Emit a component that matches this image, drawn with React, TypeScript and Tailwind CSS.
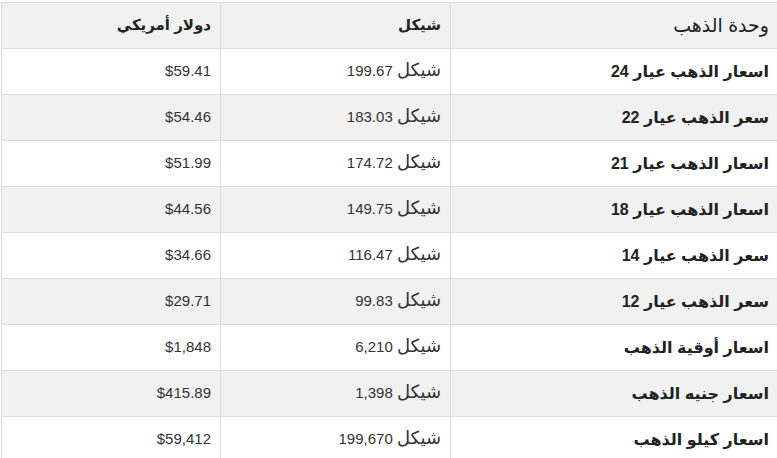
const rows = [
  { unit: "اسعار الذهب عيار 24", ils: "199.67", usd: "$59.41" },
  { unit: "سعر الذهب عيار 22", ils: "183.03", usd: "$54.46" },
  { unit: "اسعار الذهب عيار 21", ils: "174.72", usd: "$51.99" },
  { unit: "اسعار الذهب عيار 18", ils: "149.75", usd: "$44.56" },
  { unit: "سعر الذهب عيار 14", ils: "116.47", usd: "$34.66" },
  { unit: "سعر الذهب عيار 12", ils: "99.83", usd: "$29.71" },
  { unit: "اسعار أوقية الذهب", ils: "6,210", usd: "$1,848" },
  { unit: "اسعار جنيه الذهب", ils: "1,398", usd: "$415.89" },
  { unit: "اسعار كيلو الذهب", ils: "199,670", usd: "$59,412" },
];

export default function App() {
  return (
    <div className="w-[777px] h-[458px] overflow-hidden bg-white pt-[2px] pl-[1px]">
      <table
        dir="rtl"
        className="w-[777px] table-fixed border-collapse text-[15px] text-[#333] font-['Liberation_Sans','DejaVu_Sans',sans-serif]"
      >
        <colgroup>
          <col className="w-[328px]" />
          <col className="w-[230px]" />
          <col className="w-[219px]" />
        </colgroup>
        <thead>
          <tr className="h-[46px] bg-[#f1f1f1]">
            <th className="border border-[#dddddd] px-[9px] text-right font-normal text-[#222] text-[19px] leading-none">
              وحدة الذهب
            </th>
            <th className="border border-[#dddddd] px-[9px] text-right font-bold text-[#222]">شيكل</th>
            <th className="border border-[#dddddd] px-[9px] text-right font-bold text-[#222]">دولار أمريكي</th>
          </tr>
        </thead>
        <tbody>
          {rows.map((r, i) => (
            <tr key={r.unit} className={`h-[46px] ${i % 2 === 1 ? "bg-[#f1f1f1]" : "bg-white"}`}>
              <td className="border border-[#dddddd] px-[9px] text-right font-bold text-[#222] text-[16px]">{r.unit}</td>
              <td className="border border-[#dddddd] px-[9px] text-right">
                <span className="text-[18px] leading-none">شيكل</span> {r.ils}
              </td>
              <td className="border border-[#dddddd] px-[9px] text-right">{r.usd}</td>
            </tr>
          ))}
        </tbody>
      </table>
    </div>
  );
}
